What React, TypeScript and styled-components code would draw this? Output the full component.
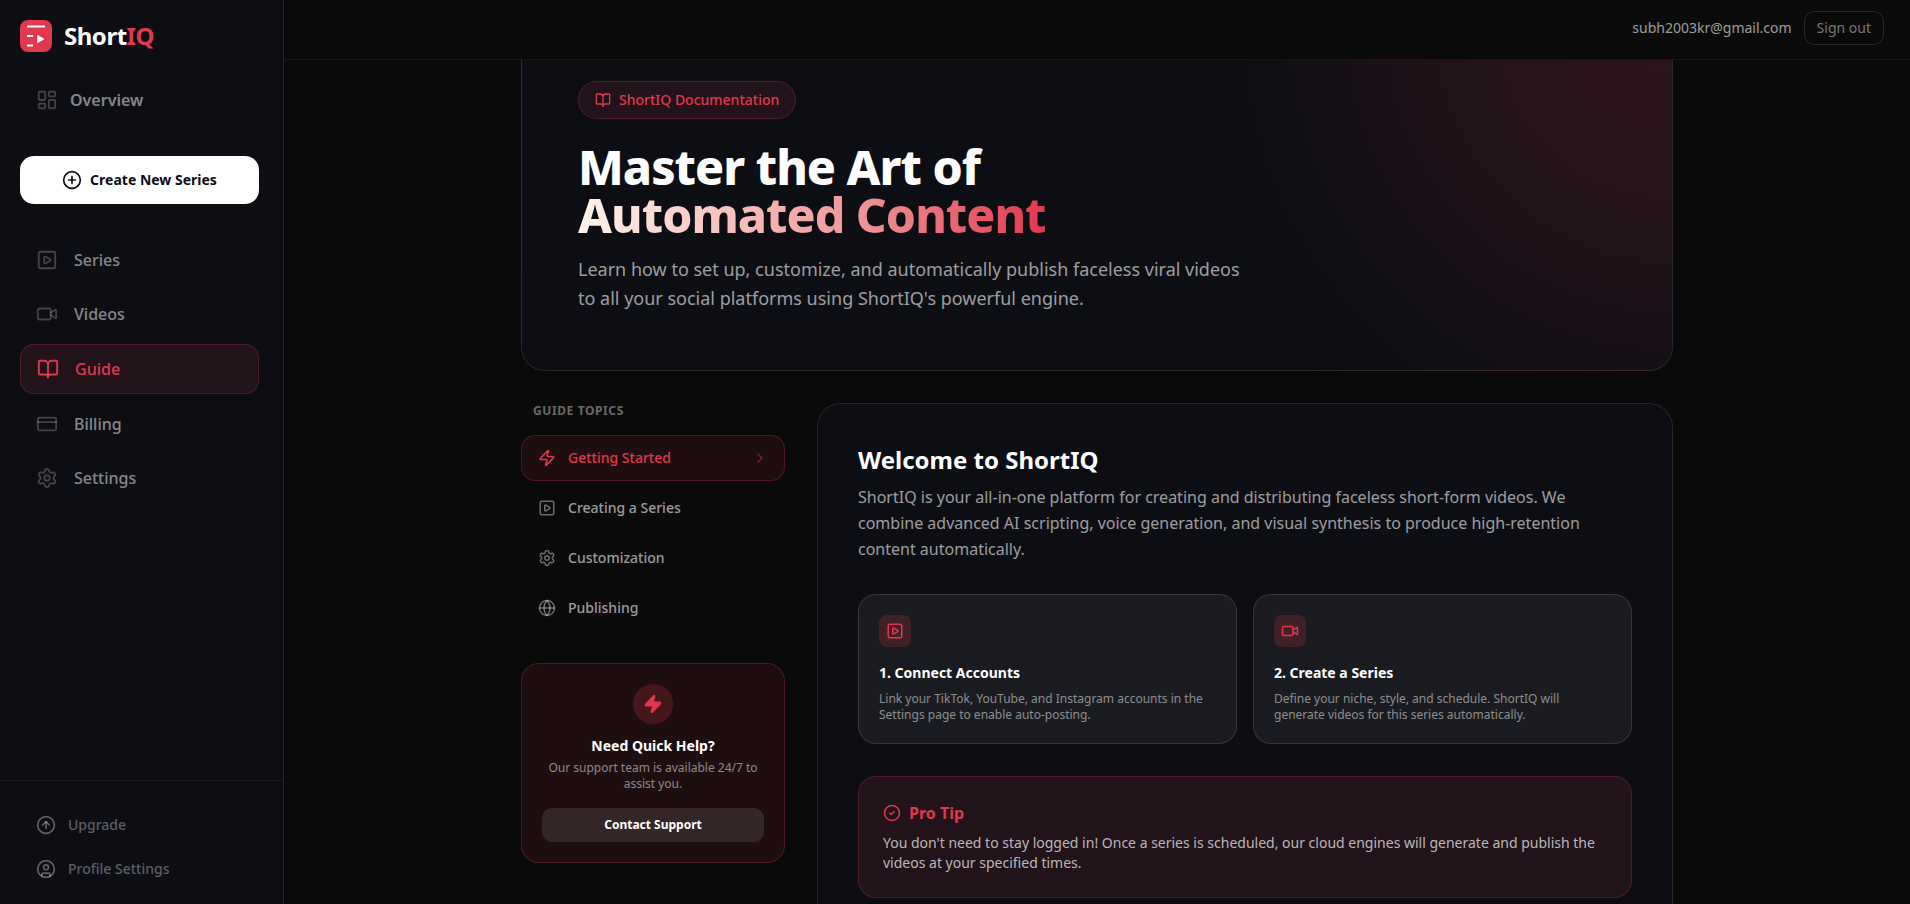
import React, { useLayoutEffect, useRef, useState } from "react";
import styled, { createGlobalStyle, css } from "styled-components";
import {
  BookOpen,
  ChevronRight,
  CircleArrowUp,
  CircleCheck,
  CirclePlus,
  CircleUser,
  CreditCard,
  Globe,
  LayoutDashboard,
  Settings,
  SquarePlay,
  Video,
  Zap,
} from "lucide-react";

const primary = "#e1384d";
const tint = (alpha: number) => `rgba(225, 56, 77, ${alpha})`;
const white = (alpha: number) => `rgba(255, 255, 255, ${alpha})`;
const panel = "#0d0e14";

const GlobalStyle = createGlobalStyle`
  *, *::before, *::after { box-sizing: border-box; }
  body {
    margin: 0;
    background: #0a0a0a;
    color: #fff;
    font-family: "Noto Sans", sans-serif;
    font-size: 16px;
    line-height: 24px;
  }
  h1, h2, h3, p { margin: 0; }
  a { color: inherit; text-decoration: none; }
  button { font: inherit; color: inherit; border: 0; background: none; cursor: pointer; }
  svg { flex-shrink: 0; display: block; }
`;

const Shell = styled.div`
  display: flex;
  height: 100vh;
`;

const Sidebar = styled.aside`
  display: flex;
  flex-direction: column;
  flex: 0 0 284px;
  background: ${panel};
  border-right: 1px solid ${white(0.1)};
`;

const SidebarMain = styled.div`
  flex: 1;
  display: flex;
  flex-direction: column;
  gap: 32px;
  padding: 20px 24px 20px 20px;
  overflow: hidden;
`;

const SidebarTop = styled.div`
  display: flex;
  flex-direction: column;
  gap: 24px;
`;

const Brand = styled.a`
  display: flex;
  align-items: center;
  gap: 12px;
  height: 32px;
  font-size: 24px;
  line-height: 32px;
  font-weight: 700;
  letter-spacing: -0.02em;
`;

const Accent = styled.span`
  color: ${primary};
`;

const Nav = styled.nav`
  display: flex;
  flex-direction: column;
  gap: 6px;
`;

const NavLink = styled.a<{ $active?: boolean; $tight?: boolean }>`
  display: flex;
  align-items: center;
  gap: ${(p) => (p.$tight ? 12 : 16)}px;
  padding: 12px 16px;
  border-radius: 14px;
  font-weight: ${(p) => (p.$tight ? 600 : 500)};
  color: ${white(0.5)};
  svg {
    color: ${white(0.22)};
  }
  ${(p) =>
    p.$active &&
    css`
      color: ${primary};
      background: ${tint(0.1)};
      border: 1px solid ${tint(0.25)};
      svg {
        color: ${primary};
      }
    `}
`;

const CreateButton = styled.button`
  display: flex;
  align-items: center;
  justify-content: center;
  gap: 8px;
  height: 48px;
  border-radius: 14px;
  background: #fff;
  color: ${panel};
  font-size: 14px;
  line-height: 20px;
  font-weight: 700;
`;

const SidebarFooter = styled.div`
  display: flex;
  flex-direction: column;
  gap: 4px;
  padding: 24px 20px 15px;
  border-top: 1px solid ${white(0.06)};
`;

const FooterLink = styled.a`
  display: flex;
  align-items: center;
  gap: 12px;
  padding: 10px 16px;
  font-size: 14px;
  line-height: 20px;
  font-weight: 500;
  color: ${white(0.34)};
`;

const Column = styled.div`
  flex: 1;
  min-width: 0;
  display: flex;
  flex-direction: column;
`;

const TopBar = styled.header`
  flex: 0 0 60px;
  display: flex;
  align-items: center;
  justify-content: flex-end;
  gap: 12px;
  padding: 0 26px 4px;
  border-bottom: 1px solid ${white(0.06)};
  font-size: 14px;
  line-height: 20px;
`;

const Email = styled.span`
  color: ${white(0.6)};
`;

const SignOut = styled.button`
  height: 34px;
  padding: 0 12px;
  border: 1px solid ${white(0.12)};
  border-radius: 10px;
  color: ${white(0.45)};
`;

const Scroller = styled.main`
  flex: 1;
  min-height: 0;
  overflow-y: auto;
  scrollbar-width: none;
  padding: 32px;
`;

const Content = styled.div`
  max-width: 1152px;
  margin: 0 auto;
  display: flex;
  flex-direction: column;
  gap: 32px;
`;

const Hero = styled.section`
  padding: 56px 56px 57px;
  border: 1px solid ${white(0.1)};
  border-radius: 24px;
  background: radial-gradient(
      circle 440px at 100% 0,
      ${tint(0.15)} 0,
      ${tint(0.11)} 180px,
      ${tint(0.065)} 300px,
      ${tint(0.025)} 380px,
      ${tint(0)} 440px
    )
    ${panel};
`;

const Badge = styled.div`
  display: inline-flex;
  align-items: center;
  gap: 8px;
  padding: 8px 16px;
  border: 1px solid ${tint(0.25)};
  border-radius: 19px;
  background: ${tint(0.1)};
  color: ${primary};
  font-size: 14px;
  line-height: 20px;
  font-weight: 500;
`;

const HeroTitle = styled.h1`
  margin-top: 24px;
  font-size: 48px;
  line-height: 48px;
  font-weight: 800;
  letter-spacing: -0.02em;
`;

const GradientLine = styled.span`
  display: block;
  width: fit-content;
  background: linear-gradient(to right, #fff4ea, #ef9599 60%, ${primary});
  background-clip: text;
  color: transparent;
`;

const HeroText = styled.p`
  max-width: 672px;
  margin-top: 16px;
  font-size: 18px;
  line-height: 29px;
  color: ${white(0.6)};
`;

const Grid = styled.div`
  display: grid;
  grid-template-columns: repeat(4, minmax(0, 1fr));
  gap: 32px;
  align-items: start;
`;

const Topics = styled.div`
  display: flex;
  flex-direction: column;
`;

const TopicsTitle = styled.h3`
  padding: 0 12px;
  margin-bottom: 16px;
  font-size: 12px;
  line-height: 16px;
  font-weight: 700;
  letter-spacing: 0.05em;
  color: ${white(0.4)};
`;

const TopicList = styled.nav`
  display: flex;
  flex-direction: column;
  gap: 4px;
`;

const Topic = styled.button<{ $active: boolean }>`
  display: flex;
  align-items: center;
  gap: 12px;
  padding: 12px 16px;
  border: 1px solid ${(p) => (p.$active ? tint(0.25) : "transparent")};
  border-radius: 14px;
  background: ${(p) => (p.$active ? tint(0.1) : "transparent")};
  color: ${(p) => (p.$active ? primary : white(0.6))};
  font-size: 14px;
  line-height: 20px;
  font-weight: 500;
  text-align: left;
  svg {
    color: ${(p) => (p.$active ? primary : white(0.4))};
  }
  svg.chevron {
    margin-left: auto;
    opacity: 0.5;
  }
`;

const HelpCard = styled.section`
  margin-top: 32px;
  padding: 20px;
  display: flex;
  flex-direction: column;
  align-items: center;
  border: 1px solid ${tint(0.25)};
  border-radius: 18px;
  background: ${tint(0.1)};
  text-align: center;
`;

const HelpIcon = styled.div`
  display: grid;
  place-items: center;
  width: 40px;
  height: 40px;
  margin-bottom: 12px;
  border-radius: 50%;
  background: ${tint(0.2)};
  color: ${primary};
`;

const SmallTitle = styled.h3`
  font-size: 14px;
  line-height: 20px;
  font-weight: 700;
`;

const SmallText = styled.p<{ $top: number }>`
  margin-top: ${(p) => p.$top}px;
  font-size: 12px;
  line-height: 16px;
  color: ${white(0.5)};
`;

const SupportButton = styled.button`
  width: 100%;
  height: 34px;
  margin-top: 16px;
  border-radius: 10px;
  background: ${white(0.1)};
  font-size: 12px;
  line-height: 16px;
  font-weight: 700;
`;

const Article = styled.article`
  grid-column: span 3;
  padding: 40px;
  border: 1px solid ${white(0.1)};
  border-radius: 24px;
  background: ${panel};
`;

const ArticleTitle = styled.h2`
  font-size: 24px;
  line-height: 32px;
  font-weight: 700;
`;

const ArticleText = styled.p`
  margin-top: 8px;
  line-height: 26px;
  color: ${white(0.6)};
`;

const Steps = styled.div`
  display: grid;
  grid-template-columns: 1fr 1fr;
  gap: 16px;
  margin: 32px 0;
`;

const Step = styled.section`
  padding: 20px;
  border: 1px solid ${white(0.12)};
  border-radius: 18px;
  background: #1a1b20;
`;

const StepIcon = styled.div`
  display: grid;
  place-items: center;
  width: 32px;
  height: 32px;
  margin-bottom: 16px;
  border-radius: 8px;
  background: ${tint(0.2)};
  color: ${primary};
`;

const Tip = styled.section`
  padding: 24px;
  border: 1px solid ${tint(0.25)};
  border-radius: 18px;
  background: ${tint(0.1)};
`;

const TipTitle = styled.h3`
  display: flex;
  align-items: center;
  gap: 8px;
  font-size: 16px;
  line-height: 24px;
  font-weight: 700;
  color: ${primary};
`;

const TipText = styled.p`
  margin-top: 8px;
  font-size: 14px;
  line-height: 20px;
  color: ${white(0.7)};
`;

const Logo = () => (
  <svg width="32" height="32" viewBox="0 0 32 32" aria-hidden="true">
    <rect width="32" height="32" rx="8" fill={primary} />
    <path
      d="M7 6.5h18M7 16h6M7 25.5h6"
      stroke="#fff"
      strokeWidth="2"
      fill="none"
    />
    <path d="M17.5 15.2v7.6l6.5-3.8z" fill="#fff" stroke="#fff" strokeLinejoin="round" strokeWidth="0.6" />
  </svg>
);

const navItems = [
  { label: "Series", Icon: SquarePlay },
  { label: "Videos", Icon: Video },
  { label: "Guide", Icon: BookOpen },
  { label: "Billing", Icon: CreditCard },
  { label: "Settings", Icon: Settings },
];

const topics = [
  { label: "Getting Started", Icon: Zap },
  { label: "Creating a Series", Icon: SquarePlay },
  { label: "Customization", Icon: Settings },
  { label: "Publishing", Icon: Globe },
];

const steps = [
  {
    title: "1. Connect Accounts",
    text: "Link your TikTok, YouTube, and Instagram accounts in the Settings page to enable auto-posting.",
    Icon: SquarePlay,
  },
  {
    title: "2. Create a Series",
    text: "Define your niche, style, and schedule. ShortIQ will generate videos for this series automatically.",
    Icon: Video,
  },
];

// The guide opens with the hero's upper padding tucked under the top bar.
const INITIAL_SCROLL = 68;

export default function App() {
  const scroller = useRef<HTMLElement>(null);
  const [topic, setTopic] = useState("Getting Started");

  useLayoutEffect(() => {
    scroller.current?.scrollTo(0, INITIAL_SCROLL);
  }, []);

  return (
    <Shell>
      <GlobalStyle />
      <Sidebar>
        <SidebarMain>
          <SidebarTop>
            <Brand href="#home">
              <Logo />
              <span>
                Short<Accent>IQ</Accent>
              </span>
            </Brand>
            <NavLink href="#overview" $tight>
              <LayoutDashboard size={22} />
              Overview
            </NavLink>
          </SidebarTop>
          <CreateButton type="button">
            <CirclePlus size={20} />
            Create New Series
          </CreateButton>
          <Nav>
            {navItems.map(({ label, Icon }) => (
              <NavLink key={label} href={`#${label.toLowerCase()}`} $active={label === "Guide"}>
                <Icon size={22} />
                {label}
              </NavLink>
            ))}
          </Nav>
        </SidebarMain>
        <SidebarFooter>
          <FooterLink href="#upgrade">
            <CircleArrowUp size={20} />
            Upgrade
          </FooterLink>
          <FooterLink href="#profile">
            <CircleUser size={20} />
            Profile Settings
          </FooterLink>
        </SidebarFooter>
      </Sidebar>

      <Column>
        <TopBar>
          <Email>subh2003kr@gmail.com</Email>
          <SignOut type="button">Sign out</SignOut>
        </TopBar>
        <Scroller ref={scroller}>
          <Content>
            <Hero>
              <Badge>
                <BookOpen size={16} />
                ShortIQ Documentation
              </Badge>
              <HeroTitle>
                Master the Art of
                <GradientLine>Automated Content</GradientLine>
              </HeroTitle>
              <HeroText>
                Learn how to set up, customize, and automatically publish faceless viral videos to all
                your social platforms using ShortIQ's powerful engine.
              </HeroText>
            </Hero>

            <Grid>
              <Topics>
                <TopicsTitle>GUIDE TOPICS</TopicsTitle>
                <TopicList>
                  {topics.map(({ label, Icon }) => (
                    <Topic
                      key={label}
                      type="button"
                      $active={label === topic}
                      onClick={() => setTopic(label)}
                    >
                      <Icon size={18} />
                      {label}
                      {label === topic && <ChevronRight className="chevron" size={16} />}
                    </Topic>
                  ))}
                </TopicList>
                <HelpCard>
                  <HelpIcon>
                    <Zap size={20} fill="currentColor" />
                  </HelpIcon>
                  <SmallTitle>Need Quick Help?</SmallTitle>
                  <SmallText $top={4}>Our support team is available 24/7 to assist you.</SmallText>
                  <SupportButton type="button">Contact Support</SupportButton>
                </HelpCard>
              </Topics>

              <Article>
                <ArticleTitle>Welcome to ShortIQ</ArticleTitle>
                <ArticleText>
                  ShortIQ is your all-in-one platform for creating and distributing faceless short-form
                  videos. We combine advanced AI scripting, voice generation, and visual synthesis to
                  produce high-retention content automatically.
                </ArticleText>
                <Steps>
                  {steps.map(({ title, text, Icon }) => (
                    <Step key={title}>
                      <StepIcon>
                        <Icon size={18} />
                      </StepIcon>
                      <SmallTitle>{title}</SmallTitle>
                      <SmallText $top={8}>{text}</SmallText>
                    </Step>
                  ))}
                </Steps>
                <Tip>
                  <TipTitle>
                    <CircleCheck size={18} />
                    Pro Tip
                  </TipTitle>
                  <TipText>
                    You don't need to stay logged in! Once a series is scheduled, our cloud engines will
                    generate and publish the videos at your specified times.
                  </TipText>
                </Tip>
              </Article>
            </Grid>
          </Content>
        </Scroller>
      </Column>
    </Shell>
  );
}
